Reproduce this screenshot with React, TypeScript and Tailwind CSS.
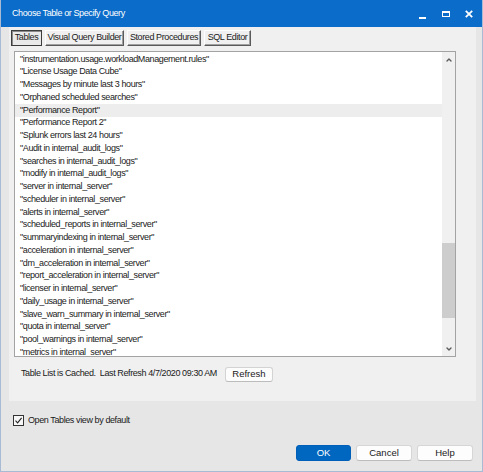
import { ChevronUp, ChevronDown } from 'lucide-react';

const tables = [
  'instrumentation.usage.workloadManagement.rules',
  'License Usage Data Cube',
  'Messages by minute last 3 hours',
  'Orphaned scheduled searches',
  'Performance Report',
  'Performance Report 2',
  'Splunk errors last 24 hours',
  'Audit in internal_audit_logs',
  'searches in internal_audit_logs',
  'modify in internal_audit_logs',
  'server in internal_server',
  'scheduler in internal_server',
  'alerts in internal_server',
  'scheduled_reports in internal_server',
  'summaryindexing in internal_server',
  'acceleration in internal_server',
  'dm_acceleration in internal_server',
  'report_acceleration in internal_server',
  'licenser in internal_server',
  'daily_usage in internal_server',
  'slave_warn_summary in internal_server',
  'quota in internal_server',
  'pool_warnings in internal_server',
  'metrics in internal_server',
];

const tabs = ['Tables', 'Visual Query Builder', 'Stored Procedures', 'SQL Editor'];
const tabWidths: Record<string, string> = {
  Tables: 'w-[31px]',
  'Visual Query Builder': 'w-[79px]',
  'Stored Procedures': 'w-[74px]',
  'SQL Editor': 'w-[47px]',
};

export default function App() {
  return (
    <div className="w-[483px] h-[472px] bg-[#e6e6e6] border-x border-b border-[#a9bbd4] flex flex-col font-['Liberation_Sans',Arial,sans-serif] text-[9px] tracking-[-0.4px] text-[#1a1a1a] overflow-hidden">
      {/* title bar */}
      <div className="h-[27px] bg-[#0b6cc9] flex items-center pl-[11px] text-white shrink-0">
        <span className="text-[9px] pt-px">Choose Table or Specify Query</span>
        <div className="ml-auto flex items-center h-full">
          <div className="w-[23px] h-full flex items-center justify-center">
            <div className="w-[7px] h-[2px] bg-white mt-[8px]" />
          </div>
          <div className="w-[23px] h-full flex items-center justify-center">
            <div className="w-[8px] h-[6px] border border-t-2 border-white" />
          </div>
          <div className="w-[23px] h-full flex items-center justify-center">
            <svg width="8" height="8" viewBox="0 0 8 8">
              <path d="M0.8 0.8 L7.2 7.2 M7.2 0.8 L0.8 7.2" stroke="white" strokeWidth="1.8" />
            </svg>
          </div>
          <div className="w-[2px]" />
        </div>
      </div>

      {/* tab panel */}
      <div className="ml-[8px] mr-[6px] h-[374px] bg-[#f0f0f0] pl-[2px] pt-[3px] shrink-0">
        <div className="flex gap-[3px] h-[16px]">
          {tabs.map((t) =>
            t === 'Tables' ? (
              <div
                key={t}
                className={`${tabWidths[t]} h-full border border-[#3c3c3c] shadow-[inset_1px_1px_0_#8a8a8a] bg-[#e9e9e9] flex items-center justify-center`}
              >
                {t}
              </div>
            ) : (
              <div
                key={t}
                className={`${tabWidths[t]} h-full border-r border-b border-[#5a5a5a] border-t border-l border-t-[#fdfdfd] border-l-[#fdfdfd] shadow-[inset_-1px_-1px_0_#a0a0a0] bg-[#f0f0f0] flex items-center justify-center whitespace-nowrap`}
              >
                {t}
              </div>
            ),
          )}
        </div>

        {/* list box */}
        <div className="ml-[3px] mt-[5px] w-[442px] h-[306px] border border-[#a3a3a3] bg-white flex">
          <div className="flex-1 pt-[1px] overflow-hidden">
            {tables.map((t, i) => (
              <div
                key={t}
                className={`h-[12.75px] flex items-center pl-[5px] whitespace-nowrap ${
                  i === 4 ? 'bg-[#ededed]' : ''
                }`}
              >
                "{t}"
              </div>
            ))}
          </div>
          <div className="w-[13px] bg-[#f0f0f0] flex flex-col items-center">
            <div className="h-[15px] flex items-center justify-center">
              <ChevronUp className="w-[8px] h-[8px] text-[#5a5a5a]" strokeWidth={4} />
            </div>
            <div className="h-[176px]" />
            <div className="w-full h-[75px] bg-[#cdcdcd]" />
            <div className="flex-1" />
            <div className="h-[15px] flex items-center justify-center">
              <ChevronDown className="w-[8px] h-[8px] text-[#5a5a5a]" strokeWidth={4} />
            </div>
          </div>
        </div>

        {/* cache status */}
        <div className="flex items-center mt-[9px] pl-[10px] h-[16px]">
          <span className="whitespace-pre">Table List is Cached.  Last Refresh 4/7/2020 09:30 AM</span>
          <button className="ml-[8px] w-[48px] h-[15px] rounded-[3px] border border-[#d3d3d3] border-b-[#bcbcbc] bg-[#fcfcfc] text-[9.5px] tracking-normal flex items-center justify-center">
            Refresh
          </button>
        </div>
      </div>

      {/* checkbox */}
      <div className="flex items-center mt-[14px] ml-[12px] gap-[4px] h-[11px]">
        <div className="w-[11px] h-[11px] border border-[#333] bg-[#f7f7f7] flex items-center justify-center">
          <svg width="9" height="9" viewBox="0 0 9 9">
            <path d="M1.5 4.6 L3.6 6.8 L7.6 1.8" stroke="#222" strokeWidth="1.1" fill="none" />
          </svg>
        </div>
        <span>Open Tables view by default</span>
      </div>

      {/* dialog buttons */}
      <div className="flex justify-end gap-[5px] mt-[19px] mr-[9px] text-[9.5px] tracking-normal">
        <button className="w-[55px] h-[16px] rounded-[3px] bg-[#0067c0] border border-[#005fb8] text-white flex items-center justify-center">
          OK
        </button>
        <button className="w-[56px] h-[16px] rounded-[3px] bg-[#fdfdfd] border border-[#d6d6d6] border-b-[#bdbdbd] flex items-center justify-center">
          Cancel
        </button>
        <button className="w-[56px] h-[16px] rounded-[3px] bg-[#fdfdfd] border border-[#d6d6d6] border-b-[#bdbdbd] flex items-center justify-center">
          Help
        </button>
      </div>
    </div>
  );
}
